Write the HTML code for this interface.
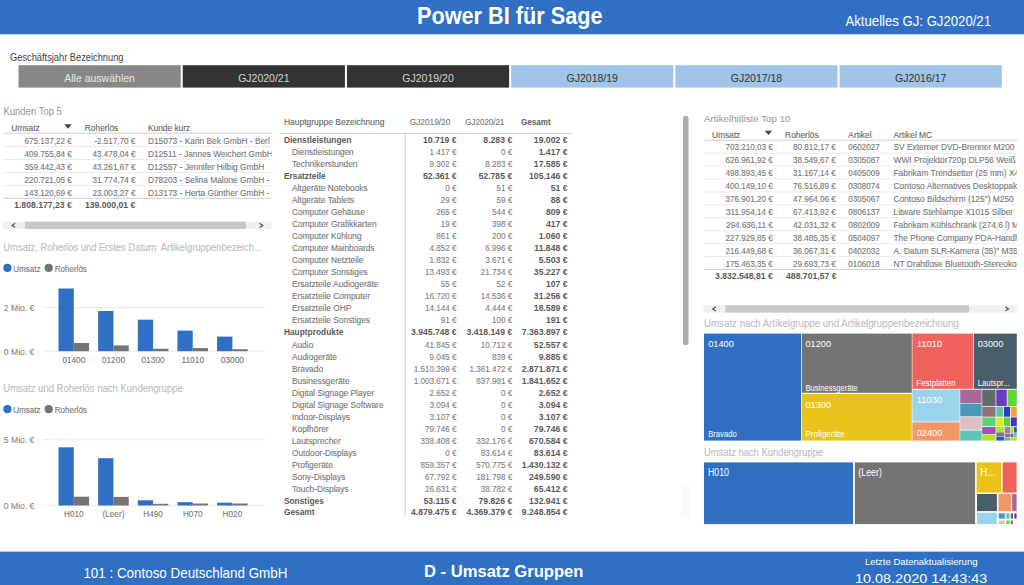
<!DOCTYPE html>
<html><head><meta charset="utf-8"><title>Power BI für Sage</title>
<style>html,body{margin:0;padding:0;background:#fff;overflow:hidden}svg{display:block}text{font-family:"Liberation Sans",sans-serif}</style>
</head><body>
<svg width="1024" height="585" viewBox="0 0 1024 585" font-family="Liberation Sans, sans-serif">
<defs><clipPath id="ck"><rect x="140" y="120" width="131.5" height="90"/></clipPath><clipPath id="ca"><rect x="880" y="130" width="137" height="160"/></clipPath></defs>
<rect width="1024" height="585" fill="#fff"/>
<rect x="0.00" y="0.00" width="1024.00" height="34.25" fill="#2F70C4" />
<text x="417.00" y="24.20" font-size="23" fill="#fff" font-weight="bold" textLength="185.50" lengthAdjust="spacingAndGlyphs">Power BI für Sage</text>
<text x="845.50" y="25.70" font-size="14" fill="#fff" textLength="145.50" lengthAdjust="spacingAndGlyphs">Aktuelles GJ: GJ2020/21</text>
<text x="10.00" y="61.30" font-size="10.3" fill="#444" textLength="113.50" lengthAdjust="spacingAndGlyphs">Geschäftsjahr Bezeichnung</text>
<rect x="18.50" y="65.20" width="162.20" height="22.40" fill="#878787" />
<text x="99.60" y="81.50" font-size="10.5" fill="#E8E8E8" text-anchor="middle">Alle auswählen</text>
<rect x="182.72" y="65.20" width="162.20" height="22.40" fill="#333333" />
<text x="263.82" y="81.50" font-size="10.5" fill="#D4D4D4" text-anchor="middle">GJ2020/21</text>
<rect x="346.94" y="65.20" width="162.20" height="22.40" fill="#333333" />
<text x="428.04" y="81.50" font-size="10.5" fill="#D4D4D4" text-anchor="middle">GJ2019/20</text>
<rect x="511.16" y="65.20" width="162.20" height="22.40" fill="#A0C4E7" />
<text x="592.26" y="81.50" font-size="10.5" fill="#333" text-anchor="middle">GJ2018/19</text>
<rect x="675.38" y="65.20" width="162.20" height="22.40" fill="#A0C4E7" />
<text x="756.48" y="81.50" font-size="10.5" fill="#333" text-anchor="middle">GJ2017/18</text>
<rect x="839.60" y="65.20" width="162.20" height="22.40" fill="#A0C4E7" />
<text x="920.70" y="81.50" font-size="10.5" fill="#333" text-anchor="middle">GJ2016/17</text>
<text x="3.40" y="115.30" font-size="10" fill="#A0A0A0" stroke="#A0A0A0" stroke-width="0.12" textLength="58.50" lengthAdjust="spacingAndGlyphs">Kunden Top 5</text>
<text x="11.30" y="131.20" font-size="9" fill="#666" stroke="#666" stroke-width="0.12" textLength="28.37" lengthAdjust="spacingAndGlyphs">Umsatz</text>
<path d="M64.3 124.3 L71.8 124.3 L68.05 128.7 Z" fill="#444"/>
<text x="84.80" y="131.20" font-size="9" fill="#666" stroke="#666" stroke-width="0.12" textLength="33.50" lengthAdjust="spacingAndGlyphs">Roherlös</text>
<text x="147.90" y="131.20" font-size="9" fill="#666" stroke="#666" stroke-width="0.12" textLength="42.34" lengthAdjust="spacingAndGlyphs">Kunde kurz</text>
<line x1="3.00" y1="133.20" x2="271.30" y2="133.20" stroke="#CFCFCF" stroke-width="1"/>
<line x1="3.00" y1="146.50" x2="271.30" y2="146.50" stroke="#EBEBEB" stroke-width="1"/>
<line x1="3.00" y1="159.50" x2="271.30" y2="159.50" stroke="#EBEBEB" stroke-width="1"/>
<line x1="3.00" y1="172.50" x2="271.30" y2="172.50" stroke="#EBEBEB" stroke-width="1"/>
<line x1="3.00" y1="185.40" x2="271.30" y2="185.40" stroke="#EBEBEB" stroke-width="1"/>
<line x1="3.00" y1="198.30" x2="271.30" y2="198.30" stroke="#CFCFCF" stroke-width="1"/>
<text x="71.80" y="144.00" font-size="9" fill="#777" stroke="#777" stroke-width="0.12" text-anchor="end" textLength="47.29" lengthAdjust="spacingAndGlyphs">675.137,22 €</text>
<text x="135.40" y="144.00" font-size="9" fill="#777" stroke="#777" stroke-width="0.12" text-anchor="end" textLength="40.98" lengthAdjust="spacingAndGlyphs">-2.517,70 €</text>
<text x="147.90" y="144.00" font-size="9" fill="#777" stroke="#777" stroke-width="0.12" textLength="121.88" lengthAdjust="spacingAndGlyphs" clip-path="url(#ck)">D15073 - Karin Bek GmbH - Berl</text>
<text x="71.80" y="157.00" font-size="9" fill="#777" stroke="#777" stroke-width="0.12" text-anchor="end" textLength="47.29" lengthAdjust="spacingAndGlyphs">409.755,84 €</text>
<text x="135.40" y="157.00" font-size="9" fill="#777" stroke="#777" stroke-width="0.12" text-anchor="end" textLength="42.79" lengthAdjust="spacingAndGlyphs">43.478,04 €</text>
<text x="147.90" y="157.00" font-size="9" fill="#777" stroke="#777" stroke-width="0.12" textLength="124.83" lengthAdjust="spacingAndGlyphs" clip-path="url(#ck)">D12511 - Jannes Weichert GmbH</text>
<text x="71.80" y="170.00" font-size="9" fill="#777" stroke="#777" stroke-width="0.12" text-anchor="end" textLength="47.29" lengthAdjust="spacingAndGlyphs">359.442,43 €</text>
<text x="135.40" y="170.00" font-size="9" fill="#777" stroke="#777" stroke-width="0.12" text-anchor="end" textLength="42.79" lengthAdjust="spacingAndGlyphs">43.261,67 €</text>
<text x="147.90" y="170.00" font-size="9" fill="#777" stroke="#777" stroke-width="0.12" textLength="116.30" lengthAdjust="spacingAndGlyphs" clip-path="url(#ck)">D12557 - Jennifer Hilbig GmbH</text>
<text x="71.80" y="183.00" font-size="9" fill="#777" stroke="#777" stroke-width="0.12" text-anchor="end" textLength="47.29" lengthAdjust="spacingAndGlyphs">220.721,05 €</text>
<text x="135.40" y="183.00" font-size="9" fill="#777" stroke="#777" stroke-width="0.12" text-anchor="end" textLength="42.79" lengthAdjust="spacingAndGlyphs">31.774,74 €</text>
<text x="147.90" y="183.00" font-size="9" fill="#777" stroke="#777" stroke-width="0.12" textLength="140.50" lengthAdjust="spacingAndGlyphs" clip-path="url(#ck)">D78203 - Selina Malone GmbH - Köln</text>
<text x="71.80" y="196.00" font-size="9" fill="#777" stroke="#777" stroke-width="0.12" text-anchor="end" textLength="47.29" lengthAdjust="spacingAndGlyphs">143.120,69 €</text>
<text x="135.40" y="196.00" font-size="9" fill="#777" stroke="#777" stroke-width="0.12" text-anchor="end" textLength="42.79" lengthAdjust="spacingAndGlyphs">23.003,27 €</text>
<text x="147.90" y="196.00" font-size="9" fill="#777" stroke="#777" stroke-width="0.12" textLength="143.29" lengthAdjust="spacingAndGlyphs" clip-path="url(#ck)">D13173 - Herta Günther GmbH - Bonn</text>
<text x="71.80" y="207.90" font-size="9" fill="#5A5A5A" text-anchor="end" font-weight="bold" textLength="57.65" lengthAdjust="spacingAndGlyphs">1.808.177,23 €</text>
<text x="135.40" y="207.90" font-size="9" fill="#5A5A5A" text-anchor="end" font-weight="bold" textLength="50.45" lengthAdjust="spacingAndGlyphs">139.000,01 €</text>
<rect x="2.90" y="221.70" width="268.40" height="7.20" fill="#F0F0F0" />
<rect x="24.90" y="221.70" width="220.90" height="7.20" fill="#C8C8C8" />
<path d="M15.2 223.3 L12 225.4 L15.2 227.5" fill="none" stroke="#555" stroke-width="1.2"/>
<path d="M259.6 223.3 L262.8 225.4 L259.6 227.5" fill="none" stroke="#555" stroke-width="1.2"/>
<text x="3.30" y="250.50" font-size="10" fill="#BDBDBD" stroke="#BDBDBD" stroke-width="0.12" textLength="258.50" lengthAdjust="spacingAndGlyphs">Umsatz, Roherlös und Erstes Datum: Artikelgruppenbezeich...</text>
<circle cx="7.4" cy="267.9" r="4.1" fill="#2F70C4"/>
<text x="13.20" y="271.80" font-size="9" fill="#777" stroke="#777" stroke-width="0.12" textLength="27.30" lengthAdjust="spacingAndGlyphs">Umsatz</text>
<circle cx="48.7" cy="267.9" r="4.1" fill="#747474"/>
<text x="54.70" y="271.80" font-size="9" fill="#777" stroke="#777" stroke-width="0.12" textLength="32.20" lengthAdjust="spacingAndGlyphs">Roherlös</text>
<line x1="42.30" y1="307.50" x2="264.70" y2="307.50" stroke="#EAEAEA" stroke-width="1"/>
<line x1="42.30" y1="351.20" x2="264.70" y2="351.20" stroke="#EAEAEA" stroke-width="1"/>
<text x="3.80" y="310.80" font-size="9" fill="#888" stroke="#888" stroke-width="0.12" textLength="30.60" lengthAdjust="spacingAndGlyphs">2 Mio. €</text>
<text x="3.80" y="354.50" font-size="9" fill="#888" stroke="#888" stroke-width="0.12" textLength="30.60" lengthAdjust="spacingAndGlyphs">0 Mio. €</text>
<rect x="58.50" y="288.50" width="15.30" height="62.70" fill="#2F70C4" />
<rect x="73.80" y="343.00" width="15.30" height="8.20" fill="#747474" />
<text x="73.80" y="363.30" font-size="9" fill="#777" stroke="#777" stroke-width="0.12" text-anchor="middle" textLength="23.27" lengthAdjust="spacingAndGlyphs">01400</text>
<rect x="98.15" y="311.00" width="15.30" height="40.20" fill="#2F70C4" />
<rect x="113.45" y="345.40" width="15.30" height="5.80" fill="#747474" />
<text x="113.45" y="363.30" font-size="9" fill="#777" stroke="#777" stroke-width="0.12" text-anchor="middle" textLength="23.27" lengthAdjust="spacingAndGlyphs">01200</text>
<rect x="137.80" y="319.70" width="15.30" height="31.50" fill="#2F70C4" />
<rect x="153.10" y="348.70" width="15.30" height="2.50" fill="#747474" />
<text x="153.10" y="363.30" font-size="9" fill="#777" stroke="#777" stroke-width="0.12" text-anchor="middle" textLength="23.27" lengthAdjust="spacingAndGlyphs">01300</text>
<rect x="177.45" y="330.60" width="15.30" height="20.60" fill="#2F70C4" />
<rect x="192.75" y="348.10" width="15.30" height="3.10" fill="#747474" />
<text x="192.75" y="363.30" font-size="9" fill="#777" stroke="#777" stroke-width="0.12" text-anchor="middle" textLength="22.65" lengthAdjust="spacingAndGlyphs">11010</text>
<rect x="217.10" y="336.60" width="15.30" height="14.60" fill="#2F70C4" />
<rect x="232.40" y="349.20" width="15.30" height="2.00" fill="#747474" />
<text x="232.40" y="363.30" font-size="9" fill="#777" stroke="#777" stroke-width="0.12" text-anchor="middle" textLength="23.27" lengthAdjust="spacingAndGlyphs">03000</text>
<text x="3.30" y="392.00" font-size="10" fill="#BDBDBD" stroke="#BDBDBD" stroke-width="0.12" textLength="179.50" lengthAdjust="spacingAndGlyphs">Umsatz und Roherlös nach Kundengruppe</text>
<circle cx="7.4" cy="409.2" r="4.1" fill="#2F70C4"/>
<text x="13.20" y="413.10" font-size="9" fill="#777" stroke="#777" stroke-width="0.12" textLength="27.30" lengthAdjust="spacingAndGlyphs">Umsatz</text>
<circle cx="48.7" cy="409.2" r="4.1" fill="#747474"/>
<text x="54.70" y="413.10" font-size="9" fill="#777" stroke="#777" stroke-width="0.12" textLength="32.20" lengthAdjust="spacingAndGlyphs">Roherlös</text>
<line x1="42.30" y1="439.70" x2="264.70" y2="439.70" stroke="#EAEAEA" stroke-width="1"/>
<line x1="42.30" y1="505.50" x2="264.70" y2="505.50" stroke="#EAEAEA" stroke-width="1"/>
<text x="3.80" y="442.90" font-size="9" fill="#888" stroke="#888" stroke-width="0.12" textLength="30.60" lengthAdjust="spacingAndGlyphs">5 Mio. €</text>
<text x="3.80" y="509.00" font-size="9" fill="#888" stroke="#888" stroke-width="0.12" textLength="30.60" lengthAdjust="spacingAndGlyphs">0 Mio. €</text>
<rect x="58.50" y="447.30" width="15.30" height="58.20" fill="#2F70C4" />
<rect x="73.80" y="496.70" width="15.30" height="8.80" fill="#747474" />
<text x="73.80" y="516.80" font-size="9" fill="#777" stroke="#777" stroke-width="0.12" text-anchor="middle" textLength="19.58" lengthAdjust="spacingAndGlyphs">H010</text>
<rect x="98.15" y="458.20" width="15.30" height="47.30" fill="#2F70C4" />
<rect x="113.45" y="496.90" width="15.30" height="8.60" fill="#747474" />
<text x="113.45" y="516.80" font-size="9" fill="#777" stroke="#777" stroke-width="0.12" text-anchor="middle" textLength="21.85" lengthAdjust="spacingAndGlyphs">(Leer)</text>
<rect x="137.80" y="500.30" width="15.30" height="5.20" fill="#2F70C4" />
<rect x="153.10" y="503.80" width="15.30" height="1.70" fill="#747474" />
<text x="153.10" y="516.80" font-size="9" fill="#777" stroke="#777" stroke-width="0.12" text-anchor="middle" textLength="19.58" lengthAdjust="spacingAndGlyphs">H490</text>
<rect x="177.45" y="502.20" width="15.30" height="3.30" fill="#2F70C4" />
<rect x="192.75" y="503.50" width="15.30" height="2.00" fill="#747474" />
<text x="192.75" y="516.80" font-size="9" fill="#777" stroke="#777" stroke-width="0.12" text-anchor="middle" textLength="19.58" lengthAdjust="spacingAndGlyphs">H070</text>
<rect x="217.10" y="502.70" width="15.30" height="2.80" fill="#2F70C4" />
<rect x="232.40" y="503.50" width="15.30" height="2.00" fill="#747474" />
<text x="232.40" y="516.80" font-size="9" fill="#777" stroke="#777" stroke-width="0.12" text-anchor="middle" textLength="19.58" lengthAdjust="spacingAndGlyphs">H020</text>
<text x="283.90" y="125.00" font-size="9" fill="#666" stroke="#666" stroke-width="0.12" textLength="100.50" lengthAdjust="spacingAndGlyphs">Hauptgruppe Bezeichnung</text>
<text x="409.70" y="125.00" font-size="9" fill="#777" stroke="#777" stroke-width="0.12" textLength="40.60" lengthAdjust="spacingAndGlyphs">GJ2019/20</text>
<text x="465.30" y="125.00" font-size="9" fill="#777" stroke="#777" stroke-width="0.12" textLength="39.10" lengthAdjust="spacingAndGlyphs">GJ2020/21</text>
<text x="521.00" y="125.00" font-size="9" fill="#5A5A5A" font-weight="bold" textLength="29.60" lengthAdjust="spacingAndGlyphs">Gesamt</text>
<line x1="280.20" y1="133.40" x2="571.60" y2="133.40" stroke="#CFCFCF" stroke-width="1"/>
<line x1="405.20" y1="133.40" x2="405.20" y2="517.80" stroke="#D6D6D6" stroke-width="1"/>
<text x="283.90" y="143.00" font-size="9" fill="#5A5A5A" font-weight="bold" textLength="67.43" lengthAdjust="spacingAndGlyphs">Dienstleistungen</text>
<text x="456.60" y="143.00" font-size="9" fill="#5A5A5A" text-anchor="end" font-weight="bold" textLength="33.63" lengthAdjust="spacingAndGlyphs">10.719 €</text>
<text x="512.20" y="143.00" font-size="9" fill="#5A5A5A" text-anchor="end" font-weight="bold" textLength="28.83" lengthAdjust="spacingAndGlyphs">8.283 €</text>
<text x="567.50" y="143.00" font-size="9" fill="#5A5A5A" text-anchor="end" font-weight="bold" textLength="33.63" lengthAdjust="spacingAndGlyphs">19.002 €</text>
<text x="291.90" y="155.03" font-size="9" fill="#777" stroke="#777" stroke-width="0.12" textLength="61.88" lengthAdjust="spacingAndGlyphs">Dienstleistungen</text>
<text x="456.60" y="155.03" font-size="9" fill="#828282" stroke="#828282" stroke-width="0.12" text-anchor="end" textLength="27.03" lengthAdjust="spacingAndGlyphs">1.417 €</text>
<text x="512.20" y="155.03" font-size="9" fill="#828282" stroke="#828282" stroke-width="0.12" text-anchor="end" textLength="11.26" lengthAdjust="spacingAndGlyphs">0 €</text>
<text x="567.50" y="155.03" font-size="9" fill="#5A5A5A" text-anchor="end" font-weight="bold" textLength="28.83" lengthAdjust="spacingAndGlyphs">1.417 €</text>
<text x="291.90" y="167.06" font-size="9" fill="#777" stroke="#777" stroke-width="0.12" textLength="65.61" lengthAdjust="spacingAndGlyphs">Technikerstunden</text>
<text x="456.60" y="167.06" font-size="9" fill="#828282" stroke="#828282" stroke-width="0.12" text-anchor="end" textLength="27.03" lengthAdjust="spacingAndGlyphs">9.302 €</text>
<text x="512.20" y="167.06" font-size="9" fill="#828282" stroke="#828282" stroke-width="0.12" text-anchor="end" textLength="27.03" lengthAdjust="spacingAndGlyphs">8.283 €</text>
<text x="567.50" y="167.06" font-size="9" fill="#5A5A5A" text-anchor="end" font-weight="bold" textLength="33.63" lengthAdjust="spacingAndGlyphs">17.585 €</text>
<text x="283.90" y="179.09" font-size="9" fill="#5A5A5A" font-weight="bold" textLength="41.87" lengthAdjust="spacingAndGlyphs">Ersatzteile</text>
<text x="456.60" y="179.09" font-size="9" fill="#5A5A5A" text-anchor="end" font-weight="bold" textLength="33.63" lengthAdjust="spacingAndGlyphs">52.361 €</text>
<text x="512.20" y="179.09" font-size="9" fill="#5A5A5A" text-anchor="end" font-weight="bold" textLength="33.63" lengthAdjust="spacingAndGlyphs">52.785 €</text>
<text x="567.50" y="179.09" font-size="9" fill="#5A5A5A" text-anchor="end" font-weight="bold" textLength="38.44" lengthAdjust="spacingAndGlyphs">105.146 €</text>
<text x="291.90" y="191.12" font-size="9" fill="#777" stroke="#777" stroke-width="0.12" textLength="75.84" lengthAdjust="spacingAndGlyphs">Altgeräte Notebooks</text>
<text x="456.60" y="191.12" font-size="9" fill="#828282" stroke="#828282" stroke-width="0.12" text-anchor="end" textLength="11.26" lengthAdjust="spacingAndGlyphs">0 €</text>
<text x="512.20" y="191.12" font-size="9" fill="#828282" stroke="#828282" stroke-width="0.12" text-anchor="end" textLength="15.76" lengthAdjust="spacingAndGlyphs">51 €</text>
<text x="567.50" y="191.12" font-size="9" fill="#5A5A5A" text-anchor="end" font-weight="bold" textLength="16.82" lengthAdjust="spacingAndGlyphs">51 €</text>
<text x="291.90" y="203.15" font-size="9" fill="#777" stroke="#777" stroke-width="0.12" textLength="62.35" lengthAdjust="spacingAndGlyphs">Altgeräte Tablets</text>
<text x="456.60" y="203.15" font-size="9" fill="#828282" stroke="#828282" stroke-width="0.12" text-anchor="end" textLength="15.76" lengthAdjust="spacingAndGlyphs">29 €</text>
<text x="512.20" y="203.15" font-size="9" fill="#828282" stroke="#828282" stroke-width="0.12" text-anchor="end" textLength="15.76" lengthAdjust="spacingAndGlyphs">59 €</text>
<text x="567.50" y="203.15" font-size="9" fill="#5A5A5A" text-anchor="end" font-weight="bold" textLength="16.82" lengthAdjust="spacingAndGlyphs">88 €</text>
<text x="291.90" y="215.18" font-size="9" fill="#777" stroke="#777" stroke-width="0.12" textLength="73.05" lengthAdjust="spacingAndGlyphs">Computer Gehäuse</text>
<text x="456.60" y="215.18" font-size="9" fill="#828282" stroke="#828282" stroke-width="0.12" text-anchor="end" textLength="20.27" lengthAdjust="spacingAndGlyphs">265 €</text>
<text x="512.20" y="215.18" font-size="9" fill="#828282" stroke="#828282" stroke-width="0.12" text-anchor="end" textLength="20.27" lengthAdjust="spacingAndGlyphs">544 €</text>
<text x="567.50" y="215.18" font-size="9" fill="#5A5A5A" text-anchor="end" font-weight="bold" textLength="21.62" lengthAdjust="spacingAndGlyphs">809 €</text>
<text x="291.90" y="227.21" font-size="9" fill="#777" stroke="#777" stroke-width="0.12" textLength="84.66" lengthAdjust="spacingAndGlyphs">Computer Grafikkarten</text>
<text x="456.60" y="227.21" font-size="9" fill="#828282" stroke="#828282" stroke-width="0.12" text-anchor="end" textLength="15.76" lengthAdjust="spacingAndGlyphs">19 €</text>
<text x="512.20" y="227.21" font-size="9" fill="#828282" stroke="#828282" stroke-width="0.12" text-anchor="end" textLength="20.27" lengthAdjust="spacingAndGlyphs">398 €</text>
<text x="567.50" y="227.21" font-size="9" fill="#5A5A5A" text-anchor="end" font-weight="bold" textLength="21.62" lengthAdjust="spacingAndGlyphs">417 €</text>
<text x="291.90" y="239.24" font-size="9" fill="#777" stroke="#777" stroke-width="0.12" textLength="69.79" lengthAdjust="spacingAndGlyphs">Computer Kühlung</text>
<text x="456.60" y="239.24" font-size="9" fill="#828282" stroke="#828282" stroke-width="0.12" text-anchor="end" textLength="20.27" lengthAdjust="spacingAndGlyphs">861 €</text>
<text x="512.20" y="239.24" font-size="9" fill="#828282" stroke="#828282" stroke-width="0.12" text-anchor="end" textLength="20.27" lengthAdjust="spacingAndGlyphs">200 €</text>
<text x="567.50" y="239.24" font-size="9" fill="#5A5A5A" text-anchor="end" font-weight="bold" textLength="28.83" lengthAdjust="spacingAndGlyphs">1.060 €</text>
<text x="291.90" y="251.27" font-size="9" fill="#777" stroke="#777" stroke-width="0.12" textLength="82.81" lengthAdjust="spacingAndGlyphs">Computer Mainboards</text>
<text x="456.60" y="251.27" font-size="9" fill="#828282" stroke="#828282" stroke-width="0.12" text-anchor="end" textLength="27.03" lengthAdjust="spacingAndGlyphs">4.852 €</text>
<text x="512.20" y="251.27" font-size="9" fill="#828282" stroke="#828282" stroke-width="0.12" text-anchor="end" textLength="27.03" lengthAdjust="spacingAndGlyphs">6.996 €</text>
<text x="567.50" y="251.27" font-size="9" fill="#5A5A5A" text-anchor="end" font-weight="bold" textLength="33.16" lengthAdjust="spacingAndGlyphs">11.848 €</text>
<text x="291.90" y="263.30" font-size="9" fill="#777" stroke="#777" stroke-width="0.12" textLength="71.64" lengthAdjust="spacingAndGlyphs">Computer Netzteile</text>
<text x="456.60" y="263.30" font-size="9" fill="#828282" stroke="#828282" stroke-width="0.12" text-anchor="end" textLength="27.03" lengthAdjust="spacingAndGlyphs">1.832 €</text>
<text x="512.20" y="263.30" font-size="9" fill="#828282" stroke="#828282" stroke-width="0.12" text-anchor="end" textLength="27.03" lengthAdjust="spacingAndGlyphs">3.671 €</text>
<text x="567.50" y="263.30" font-size="9" fill="#5A5A5A" text-anchor="end" font-weight="bold" textLength="28.83" lengthAdjust="spacingAndGlyphs">5.503 €</text>
<text x="291.90" y="275.33" font-size="9" fill="#777" stroke="#777" stroke-width="0.12" textLength="75.83" lengthAdjust="spacingAndGlyphs">Computer Sonstiges</text>
<text x="456.60" y="275.33" font-size="9" fill="#828282" stroke="#828282" stroke-width="0.12" text-anchor="end" textLength="31.53" lengthAdjust="spacingAndGlyphs">13.493 €</text>
<text x="512.20" y="275.33" font-size="9" fill="#828282" stroke="#828282" stroke-width="0.12" text-anchor="end" textLength="31.53" lengthAdjust="spacingAndGlyphs">21.734 €</text>
<text x="567.50" y="275.33" font-size="9" fill="#5A5A5A" text-anchor="end" font-weight="bold" textLength="33.63" lengthAdjust="spacingAndGlyphs">35.227 €</text>
<text x="291.90" y="287.36" font-size="9" fill="#777" stroke="#777" stroke-width="0.12" textLength="86.54" lengthAdjust="spacingAndGlyphs">Ersatzteile Audiogeräte</text>
<text x="456.60" y="287.36" font-size="9" fill="#828282" stroke="#828282" stroke-width="0.12" text-anchor="end" textLength="15.76" lengthAdjust="spacingAndGlyphs">55 €</text>
<text x="512.20" y="287.36" font-size="9" fill="#828282" stroke="#828282" stroke-width="0.12" text-anchor="end" textLength="15.76" lengthAdjust="spacingAndGlyphs">52 €</text>
<text x="567.50" y="287.36" font-size="9" fill="#5A5A5A" text-anchor="end" font-weight="bold" textLength="21.62" lengthAdjust="spacingAndGlyphs">107 €</text>
<text x="291.90" y="299.39" font-size="9" fill="#777" stroke="#777" stroke-width="0.12" textLength="78.15" lengthAdjust="spacingAndGlyphs">Ersatzteile Computer</text>
<text x="456.60" y="299.39" font-size="9" fill="#828282" stroke="#828282" stroke-width="0.12" text-anchor="end" textLength="31.53" lengthAdjust="spacingAndGlyphs">16.720 €</text>
<text x="512.20" y="299.39" font-size="9" fill="#828282" stroke="#828282" stroke-width="0.12" text-anchor="end" textLength="31.53" lengthAdjust="spacingAndGlyphs">14.536 €</text>
<text x="567.50" y="299.39" font-size="9" fill="#5A5A5A" text-anchor="end" font-weight="bold" textLength="33.63" lengthAdjust="spacingAndGlyphs">31.256 €</text>
<text x="291.90" y="311.42" font-size="9" fill="#777" stroke="#777" stroke-width="0.12" textLength="59.54" lengthAdjust="spacingAndGlyphs">Ersatzteile OHP</text>
<text x="456.60" y="311.42" font-size="9" fill="#828282" stroke="#828282" stroke-width="0.12" text-anchor="end" textLength="31.53" lengthAdjust="spacingAndGlyphs">14.144 €</text>
<text x="512.20" y="311.42" font-size="9" fill="#828282" stroke="#828282" stroke-width="0.12" text-anchor="end" textLength="27.03" lengthAdjust="spacingAndGlyphs">4.444 €</text>
<text x="567.50" y="311.42" font-size="9" fill="#5A5A5A" text-anchor="end" font-weight="bold" textLength="33.63" lengthAdjust="spacingAndGlyphs">18.589 €</text>
<text x="291.90" y="323.45" font-size="9" fill="#777" stroke="#777" stroke-width="0.12" textLength="78.16" lengthAdjust="spacingAndGlyphs">Ersatzteile Sonstiges</text>
<text x="456.60" y="323.45" font-size="9" fill="#828282" stroke="#828282" stroke-width="0.12" text-anchor="end" textLength="15.76" lengthAdjust="spacingAndGlyphs">91 €</text>
<text x="512.20" y="323.45" font-size="9" fill="#828282" stroke="#828282" stroke-width="0.12" text-anchor="end" textLength="20.27" lengthAdjust="spacingAndGlyphs">100 €</text>
<text x="567.50" y="323.45" font-size="9" fill="#5A5A5A" text-anchor="end" font-weight="bold" textLength="21.62" lengthAdjust="spacingAndGlyphs">191 €</text>
<text x="283.90" y="335.48" font-size="9" fill="#5A5A5A" font-weight="bold" textLength="59.52" lengthAdjust="spacingAndGlyphs">Hauptprodukte</text>
<text x="456.60" y="335.48" font-size="9" fill="#5A5A5A" text-anchor="end" font-weight="bold" textLength="45.64" lengthAdjust="spacingAndGlyphs">3.945.748 €</text>
<text x="512.20" y="335.48" font-size="9" fill="#5A5A5A" text-anchor="end" font-weight="bold" textLength="45.64" lengthAdjust="spacingAndGlyphs">3.418.149 €</text>
<text x="567.50" y="335.48" font-size="9" fill="#5A5A5A" text-anchor="end" font-weight="bold" textLength="45.64" lengthAdjust="spacingAndGlyphs">7.363.897 €</text>
<text x="291.90" y="347.51" font-size="9" fill="#777" stroke="#777" stroke-width="0.12" textLength="21.41" lengthAdjust="spacingAndGlyphs">Audio</text>
<text x="456.60" y="347.51" font-size="9" fill="#828282" stroke="#828282" stroke-width="0.12" text-anchor="end" textLength="31.53" lengthAdjust="spacingAndGlyphs">41.845 €</text>
<text x="512.20" y="347.51" font-size="9" fill="#828282" stroke="#828282" stroke-width="0.12" text-anchor="end" textLength="31.53" lengthAdjust="spacingAndGlyphs">10.712 €</text>
<text x="567.50" y="347.51" font-size="9" fill="#5A5A5A" text-anchor="end" font-weight="bold" textLength="33.63" lengthAdjust="spacingAndGlyphs">52.557 €</text>
<text x="291.90" y="359.54" font-size="9" fill="#777" stroke="#777" stroke-width="0.12" textLength="45.14" lengthAdjust="spacingAndGlyphs">Audiogeräte</text>
<text x="456.60" y="359.54" font-size="9" fill="#828282" stroke="#828282" stroke-width="0.12" text-anchor="end" textLength="27.03" lengthAdjust="spacingAndGlyphs">9.045 €</text>
<text x="512.20" y="359.54" font-size="9" fill="#828282" stroke="#828282" stroke-width="0.12" text-anchor="end" textLength="20.27" lengthAdjust="spacingAndGlyphs">839 €</text>
<text x="567.50" y="359.54" font-size="9" fill="#5A5A5A" text-anchor="end" font-weight="bold" textLength="28.83" lengthAdjust="spacingAndGlyphs">9.885 €</text>
<text x="291.90" y="371.57" font-size="9" fill="#777" stroke="#777" stroke-width="0.12" textLength="31.17" lengthAdjust="spacingAndGlyphs">Bravado</text>
<text x="456.60" y="371.57" font-size="9" fill="#828282" stroke="#828282" stroke-width="0.12" text-anchor="end" textLength="42.79" lengthAdjust="spacingAndGlyphs">1.510.399 €</text>
<text x="512.20" y="371.57" font-size="9" fill="#828282" stroke="#828282" stroke-width="0.12" text-anchor="end" textLength="42.79" lengthAdjust="spacingAndGlyphs">1.361.472 €</text>
<text x="567.50" y="371.57" font-size="9" fill="#5A5A5A" text-anchor="end" font-weight="bold" textLength="45.64" lengthAdjust="spacingAndGlyphs">2.871.871 €</text>
<text x="291.90" y="383.60" font-size="9" fill="#777" stroke="#777" stroke-width="0.12" textLength="57.69" lengthAdjust="spacingAndGlyphs">Businessgeräte</text>
<text x="456.60" y="383.60" font-size="9" fill="#828282" stroke="#828282" stroke-width="0.12" text-anchor="end" textLength="42.79" lengthAdjust="spacingAndGlyphs">1.003.671 €</text>
<text x="512.20" y="383.60" font-size="9" fill="#828282" stroke="#828282" stroke-width="0.12" text-anchor="end" textLength="36.03" lengthAdjust="spacingAndGlyphs">837.981 €</text>
<text x="567.50" y="383.60" font-size="9" fill="#5A5A5A" text-anchor="end" font-weight="bold" textLength="45.64" lengthAdjust="spacingAndGlyphs">1.841.652 €</text>
<text x="291.90" y="395.63" font-size="9" fill="#777" stroke="#777" stroke-width="0.12" textLength="82.35" lengthAdjust="spacingAndGlyphs">Digital Signage Player</text>
<text x="456.60" y="395.63" font-size="9" fill="#828282" stroke="#828282" stroke-width="0.12" text-anchor="end" textLength="27.03" lengthAdjust="spacingAndGlyphs">2.652 €</text>
<text x="512.20" y="395.63" font-size="9" fill="#828282" stroke="#828282" stroke-width="0.12" text-anchor="end" textLength="11.26" lengthAdjust="spacingAndGlyphs">0 €</text>
<text x="567.50" y="395.63" font-size="9" fill="#5A5A5A" text-anchor="end" font-weight="bold" textLength="28.83" lengthAdjust="spacingAndGlyphs">2.652 €</text>
<text x="291.90" y="407.66" font-size="9" fill="#777" stroke="#777" stroke-width="0.12" textLength="91.66" lengthAdjust="spacingAndGlyphs">Digital Signage Software</text>
<text x="456.60" y="407.66" font-size="9" fill="#828282" stroke="#828282" stroke-width="0.12" text-anchor="end" textLength="27.03" lengthAdjust="spacingAndGlyphs">3.094 €</text>
<text x="512.20" y="407.66" font-size="9" fill="#828282" stroke="#828282" stroke-width="0.12" text-anchor="end" textLength="11.26" lengthAdjust="spacingAndGlyphs">0 €</text>
<text x="567.50" y="407.66" font-size="9" fill="#5A5A5A" text-anchor="end" font-weight="bold" textLength="28.83" lengthAdjust="spacingAndGlyphs">3.094 €</text>
<text x="291.90" y="419.69" font-size="9" fill="#777" stroke="#777" stroke-width="0.12" textLength="58.15" lengthAdjust="spacingAndGlyphs">Indoor-Displays</text>
<text x="456.60" y="419.69" font-size="9" fill="#828282" stroke="#828282" stroke-width="0.12" text-anchor="end" textLength="27.03" lengthAdjust="spacingAndGlyphs">3.107 €</text>
<text x="512.20" y="419.69" font-size="9" fill="#828282" stroke="#828282" stroke-width="0.12" text-anchor="end" textLength="11.26" lengthAdjust="spacingAndGlyphs">0 €</text>
<text x="567.50" y="419.69" font-size="9" fill="#5A5A5A" text-anchor="end" font-weight="bold" textLength="28.83" lengthAdjust="spacingAndGlyphs">3.107 €</text>
<text x="291.90" y="431.72" font-size="9" fill="#777" stroke="#777" stroke-width="0.12" textLength="36.76" lengthAdjust="spacingAndGlyphs">Kopfhörer</text>
<text x="456.60" y="431.72" font-size="9" fill="#828282" stroke="#828282" stroke-width="0.12" text-anchor="end" textLength="31.53" lengthAdjust="spacingAndGlyphs">79.746 €</text>
<text x="512.20" y="431.72" font-size="9" fill="#828282" stroke="#828282" stroke-width="0.12" text-anchor="end" textLength="11.26" lengthAdjust="spacingAndGlyphs">0 €</text>
<text x="567.50" y="431.72" font-size="9" fill="#5A5A5A" text-anchor="end" font-weight="bold" textLength="33.63" lengthAdjust="spacingAndGlyphs">79.746 €</text>
<text x="291.90" y="443.75" font-size="9" fill="#777" stroke="#777" stroke-width="0.12" textLength="48.85" lengthAdjust="spacingAndGlyphs">Lautsprecher</text>
<text x="456.60" y="443.75" font-size="9" fill="#828282" stroke="#828282" stroke-width="0.12" text-anchor="end" textLength="36.03" lengthAdjust="spacingAndGlyphs">338.408 €</text>
<text x="512.20" y="443.75" font-size="9" fill="#828282" stroke="#828282" stroke-width="0.12" text-anchor="end" textLength="36.03" lengthAdjust="spacingAndGlyphs">332.176 €</text>
<text x="567.50" y="443.75" font-size="9" fill="#5A5A5A" text-anchor="end" font-weight="bold" textLength="38.44" lengthAdjust="spacingAndGlyphs">670.584 €</text>
<text x="291.90" y="455.78" font-size="9" fill="#777" stroke="#777" stroke-width="0.12" textLength="64.66" lengthAdjust="spacingAndGlyphs">Outdoor-Displays</text>
<text x="456.60" y="455.78" font-size="9" fill="#828282" stroke="#828282" stroke-width="0.12" text-anchor="end" textLength="11.26" lengthAdjust="spacingAndGlyphs">0 €</text>
<text x="512.20" y="455.78" font-size="9" fill="#828282" stroke="#828282" stroke-width="0.12" text-anchor="end" textLength="31.53" lengthAdjust="spacingAndGlyphs">83.614 €</text>
<text x="567.50" y="455.78" font-size="9" fill="#5A5A5A" text-anchor="end" font-weight="bold" textLength="33.63" lengthAdjust="spacingAndGlyphs">83.614 €</text>
<text x="291.90" y="467.81" font-size="9" fill="#777" stroke="#777" stroke-width="0.12" textLength="40.94" lengthAdjust="spacingAndGlyphs">Profigeräte</text>
<text x="456.60" y="467.81" font-size="9" fill="#828282" stroke="#828282" stroke-width="0.12" text-anchor="end" textLength="36.03" lengthAdjust="spacingAndGlyphs">859.357 €</text>
<text x="512.20" y="467.81" font-size="9" fill="#828282" stroke="#828282" stroke-width="0.12" text-anchor="end" textLength="36.03" lengthAdjust="spacingAndGlyphs">570.775 €</text>
<text x="567.50" y="467.81" font-size="9" fill="#5A5A5A" text-anchor="end" font-weight="bold" textLength="45.64" lengthAdjust="spacingAndGlyphs">1.430.132 €</text>
<text x="291.90" y="479.84" font-size="9" fill="#777" stroke="#777" stroke-width="0.12" textLength="53.49" lengthAdjust="spacingAndGlyphs">Sony-Displays</text>
<text x="456.60" y="479.84" font-size="9" fill="#828282" stroke="#828282" stroke-width="0.12" text-anchor="end" textLength="31.53" lengthAdjust="spacingAndGlyphs">67.792 €</text>
<text x="512.20" y="479.84" font-size="9" fill="#828282" stroke="#828282" stroke-width="0.12" text-anchor="end" textLength="36.03" lengthAdjust="spacingAndGlyphs">181.798 €</text>
<text x="567.50" y="479.84" font-size="9" fill="#5A5A5A" text-anchor="end" font-weight="bold" textLength="38.44" lengthAdjust="spacingAndGlyphs">249.590 €</text>
<text x="291.90" y="491.87" font-size="9" fill="#777" stroke="#777" stroke-width="0.12" textLength="56.75" lengthAdjust="spacingAndGlyphs">Touch-Displays</text>
<text x="456.60" y="491.87" font-size="9" fill="#828282" stroke="#828282" stroke-width="0.12" text-anchor="end" textLength="31.53" lengthAdjust="spacingAndGlyphs">26.631 €</text>
<text x="512.20" y="491.87" font-size="9" fill="#828282" stroke="#828282" stroke-width="0.12" text-anchor="end" textLength="31.53" lengthAdjust="spacingAndGlyphs">38.782 €</text>
<text x="567.50" y="491.87" font-size="9" fill="#5A5A5A" text-anchor="end" font-weight="bold" textLength="33.63" lengthAdjust="spacingAndGlyphs">65.412 €</text>
<text x="283.90" y="503.90" font-size="9" fill="#5A5A5A" font-weight="bold" textLength="40.00" lengthAdjust="spacingAndGlyphs">Sonstiges</text>
<text x="456.60" y="503.90" font-size="9" fill="#5A5A5A" text-anchor="end" font-weight="bold" textLength="33.16" lengthAdjust="spacingAndGlyphs">53.115 €</text>
<text x="512.20" y="503.90" font-size="9" fill="#5A5A5A" text-anchor="end" font-weight="bold" textLength="33.63" lengthAdjust="spacingAndGlyphs">79.826 €</text>
<text x="567.50" y="503.90" font-size="9" fill="#5A5A5A" text-anchor="end" font-weight="bold" textLength="38.44" lengthAdjust="spacingAndGlyphs">132.941 €</text>
<text x="283.90" y="514.70" font-size="9" fill="#5A5A5A" font-weight="bold" textLength="30.70" lengthAdjust="spacingAndGlyphs">Gesamt</text>
<text x="456.60" y="514.70" font-size="9" fill="#5A5A5A" text-anchor="end" font-weight="bold" textLength="45.64" lengthAdjust="spacingAndGlyphs">4.879.475 €</text>
<text x="512.20" y="514.70" font-size="9" fill="#5A5A5A" text-anchor="end" font-weight="bold" textLength="45.64" lengthAdjust="spacingAndGlyphs">4.369.379 €</text>
<text x="567.50" y="514.70" font-size="9" fill="#5A5A5A" text-anchor="end" font-weight="bold" textLength="45.64" lengthAdjust="spacingAndGlyphs">9.248.854 €</text>
<rect x="682.90" y="115.80" width="5.60" height="229.50" fill="#ADADAD" rx="2.8"/>
<rect x="681.00" y="485.00" width="8.60" height="33.60" fill="#FAFAFA" />
<text x="704.10" y="121.90" font-size="9.6" fill="#A0A0A0" stroke="#A0A0A0" stroke-width="0.12" textLength="86.40" lengthAdjust="spacingAndGlyphs">Artikelhitliste Top 10</text>
<text x="711.90" y="137.70" font-size="9" fill="#666" stroke="#666" stroke-width="0.12" textLength="28.37" lengthAdjust="spacingAndGlyphs">Umsatz</text>
<path d="M764.7 130.7 L772.2 130.7 L768.45 134.9 Z" fill="#444"/>
<text x="785.10" y="137.70" font-size="9" fill="#666" stroke="#666" stroke-width="0.12" textLength="33.50" lengthAdjust="spacingAndGlyphs">Roherlös</text>
<text x="848.30" y="137.70" font-size="9" fill="#666" stroke="#666" stroke-width="0.12" textLength="23.25" lengthAdjust="spacingAndGlyphs">Artikel</text>
<text x="893.50" y="137.70" font-size="9" fill="#666" stroke="#666" stroke-width="0.12" textLength="38.60" lengthAdjust="spacingAndGlyphs">Artikel MC</text>
<line x1="704.10" y1="140.20" x2="1017.00" y2="140.20" stroke="#CFCFCF" stroke-width="1"/>
<text x="772.70" y="150.20" font-size="9" fill="#777" stroke="#777" stroke-width="0.12" text-anchor="end" textLength="47.29" lengthAdjust="spacingAndGlyphs">703.210,03 €</text>
<text x="835.80" y="150.20" font-size="9" fill="#777" stroke="#777" stroke-width="0.12" text-anchor="end" textLength="42.79" lengthAdjust="spacingAndGlyphs">80.812,17 €</text>
<text x="848.30" y="150.20" font-size="9" fill="#777" stroke="#777" stroke-width="0.12" textLength="31.53" lengthAdjust="spacingAndGlyphs">0602027</text>
<text x="893.50" y="150.20" font-size="9" fill="#777" stroke="#777" stroke-width="0.12" textLength="144.67" lengthAdjust="spacingAndGlyphs" clip-path="url(#ca)">SV Externer DVD-Brenner M200 Silber</text>
<line x1="704.10" y1="153.13" x2="1017.00" y2="153.13" stroke="#EBEBEB" stroke-width="1"/>
<text x="772.70" y="163.13" font-size="9" fill="#777" stroke="#777" stroke-width="0.12" text-anchor="end" textLength="47.29" lengthAdjust="spacingAndGlyphs">626.961,92 €</text>
<text x="835.80" y="163.13" font-size="9" fill="#777" stroke="#777" stroke-width="0.12" text-anchor="end" textLength="42.79" lengthAdjust="spacingAndGlyphs">38.549,67 €</text>
<text x="848.30" y="163.13" font-size="9" fill="#777" stroke="#777" stroke-width="0.12" textLength="31.53" lengthAdjust="spacingAndGlyphs">0305087</text>
<text x="893.50" y="163.13" font-size="9" fill="#777" stroke="#777" stroke-width="0.12" textLength="122.18" lengthAdjust="spacingAndGlyphs" clip-path="url(#ca)">WWI Projektor720p DLP56 Weiß</text>
<line x1="704.10" y1="166.06" x2="1017.00" y2="166.06" stroke="#EBEBEB" stroke-width="1"/>
<text x="772.70" y="176.06" font-size="9" fill="#777" stroke="#777" stroke-width="0.12" text-anchor="end" textLength="47.29" lengthAdjust="spacingAndGlyphs">498.893,45 €</text>
<text x="835.80" y="176.06" font-size="9" fill="#777" stroke="#777" stroke-width="0.12" text-anchor="end" textLength="42.79" lengthAdjust="spacingAndGlyphs">31.167,14 €</text>
<text x="848.30" y="176.06" font-size="9" fill="#777" stroke="#777" stroke-width="0.12" textLength="31.53" lengthAdjust="spacingAndGlyphs">0405009</text>
<text x="893.50" y="176.06" font-size="9" fill="#777" stroke="#777" stroke-width="0.12" textLength="135.05" lengthAdjust="spacingAndGlyphs" clip-path="url(#ca)">Fabrikam Trendsetter (25 mm) X400</text>
<line x1="704.10" y1="178.99" x2="1017.00" y2="178.99" stroke="#EBEBEB" stroke-width="1"/>
<text x="772.70" y="188.99" font-size="9" fill="#777" stroke="#777" stroke-width="0.12" text-anchor="end" textLength="47.29" lengthAdjust="spacingAndGlyphs">400.149,10 €</text>
<text x="835.80" y="188.99" font-size="9" fill="#777" stroke="#777" stroke-width="0.12" text-anchor="end" textLength="42.79" lengthAdjust="spacingAndGlyphs">76.516,89 €</text>
<text x="848.30" y="188.99" font-size="9" fill="#777" stroke="#777" stroke-width="0.12" textLength="31.53" lengthAdjust="spacingAndGlyphs">0308074</text>
<text x="893.50" y="188.99" font-size="9" fill="#777" stroke="#777" stroke-width="0.12" textLength="130.74" lengthAdjust="spacingAndGlyphs" clip-path="url(#ca)">Contoso Alternatives Desktoppaket</text>
<line x1="704.10" y1="191.92" x2="1017.00" y2="191.92" stroke="#EBEBEB" stroke-width="1"/>
<text x="772.70" y="201.92" font-size="9" fill="#777" stroke="#777" stroke-width="0.12" text-anchor="end" textLength="47.29" lengthAdjust="spacingAndGlyphs">376.901,20 €</text>
<text x="835.80" y="201.92" font-size="9" fill="#777" stroke="#777" stroke-width="0.12" text-anchor="end" textLength="42.79" lengthAdjust="spacingAndGlyphs">47.964,06 €</text>
<text x="848.30" y="201.92" font-size="9" fill="#777" stroke="#777" stroke-width="0.12" textLength="31.53" lengthAdjust="spacingAndGlyphs">0305067</text>
<text x="893.50" y="201.92" font-size="9" fill="#777" stroke="#777" stroke-width="0.12" textLength="120.20" lengthAdjust="spacingAndGlyphs" clip-path="url(#ca)">Contoso Bildschirm (125&quot;) M250</text>
<line x1="704.10" y1="204.85" x2="1017.00" y2="204.85" stroke="#EBEBEB" stroke-width="1"/>
<text x="772.70" y="214.85" font-size="9" fill="#777" stroke="#777" stroke-width="0.12" text-anchor="end" textLength="46.69" lengthAdjust="spacingAndGlyphs">311.954,14 €</text>
<text x="835.80" y="214.85" font-size="9" fill="#777" stroke="#777" stroke-width="0.12" text-anchor="end" textLength="42.79" lengthAdjust="spacingAndGlyphs">67.413,92 €</text>
<text x="848.30" y="214.85" font-size="9" fill="#777" stroke="#777" stroke-width="0.12" textLength="31.53" lengthAdjust="spacingAndGlyphs">0806137</text>
<text x="893.50" y="214.85" font-size="9" fill="#777" stroke="#777" stroke-width="0.12" textLength="119.57" lengthAdjust="spacingAndGlyphs" clip-path="url(#ca)">Litware Stehlampe X1015 Silber</text>
<line x1="704.10" y1="217.78" x2="1017.00" y2="217.78" stroke="#EBEBEB" stroke-width="1"/>
<text x="772.70" y="227.78" font-size="9" fill="#777" stroke="#777" stroke-width="0.12" text-anchor="end" textLength="46.69" lengthAdjust="spacingAndGlyphs">294.636,11 €</text>
<text x="835.80" y="227.78" font-size="9" fill="#777" stroke="#777" stroke-width="0.12" text-anchor="end" textLength="42.79" lengthAdjust="spacingAndGlyphs">42.031,32 €</text>
<text x="848.30" y="227.78" font-size="9" fill="#777" stroke="#777" stroke-width="0.12" textLength="31.53" lengthAdjust="spacingAndGlyphs">0802009</text>
<text x="893.50" y="227.78" font-size="9" fill="#777" stroke="#777" stroke-width="0.12" textLength="125.59" lengthAdjust="spacingAndGlyphs" clip-path="url(#ca)">Fabrikam Kühlschrank (274,6 l) M</text>
<line x1="704.10" y1="230.71" x2="1017.00" y2="230.71" stroke="#EBEBEB" stroke-width="1"/>
<text x="772.70" y="240.71" font-size="9" fill="#777" stroke="#777" stroke-width="0.12" text-anchor="end" textLength="47.29" lengthAdjust="spacingAndGlyphs">227.929,85 €</text>
<text x="835.80" y="240.71" font-size="9" fill="#777" stroke="#777" stroke-width="0.12" text-anchor="end" textLength="42.79" lengthAdjust="spacingAndGlyphs">38.485,35 €</text>
<text x="848.30" y="240.71" font-size="9" fill="#777" stroke="#777" stroke-width="0.12" textLength="31.53" lengthAdjust="spacingAndGlyphs">0504097</text>
<text x="893.50" y="240.71" font-size="9" fill="#777" stroke="#777" stroke-width="0.12" textLength="137.25" lengthAdjust="spacingAndGlyphs" clip-path="url(#ca)">The Phone Company PDA-Handheld</text>
<line x1="704.10" y1="243.64" x2="1017.00" y2="243.64" stroke="#EBEBEB" stroke-width="1"/>
<text x="772.70" y="253.64" font-size="9" fill="#777" stroke="#777" stroke-width="0.12" text-anchor="end" textLength="47.29" lengthAdjust="spacingAndGlyphs">216.449,68 €</text>
<text x="835.80" y="253.64" font-size="9" fill="#777" stroke="#777" stroke-width="0.12" text-anchor="end" textLength="42.79" lengthAdjust="spacingAndGlyphs">36.067,31 €</text>
<text x="848.30" y="253.64" font-size="9" fill="#777" stroke="#777" stroke-width="0.12" textLength="31.53" lengthAdjust="spacingAndGlyphs">0402032</text>
<text x="893.50" y="253.64" font-size="9" fill="#777" stroke="#777" stroke-width="0.12" textLength="129.03" lengthAdjust="spacingAndGlyphs" clip-path="url(#ca)">A. Datum SLR-Kamera (35)&quot; M350</text>
<line x1="704.10" y1="256.57" x2="1017.00" y2="256.57" stroke="#EBEBEB" stroke-width="1"/>
<text x="772.70" y="266.57" font-size="9" fill="#777" stroke="#777" stroke-width="0.12" text-anchor="end" textLength="47.29" lengthAdjust="spacingAndGlyphs">175.463,35 €</text>
<text x="835.80" y="266.57" font-size="9" fill="#777" stroke="#777" stroke-width="0.12" text-anchor="end" textLength="42.79" lengthAdjust="spacingAndGlyphs">29.693,73 €</text>
<text x="848.30" y="266.57" font-size="9" fill="#777" stroke="#777" stroke-width="0.12" textLength="31.53" lengthAdjust="spacingAndGlyphs">0106018</text>
<text x="893.50" y="266.57" font-size="9" fill="#777" stroke="#777" stroke-width="0.12" textLength="130.27" lengthAdjust="spacingAndGlyphs" clip-path="url(#ca)">NT Drahtlose Bluetooth-Stereokopf</text>
<line x1="704.10" y1="269.50" x2="1017.00" y2="269.50" stroke="#CFCFCF" stroke-width="1"/>
<text x="772.70" y="278.90" font-size="9" fill="#5A5A5A" text-anchor="end" font-weight="bold" textLength="57.65" lengthAdjust="spacingAndGlyphs">3.832.548,81 €</text>
<text x="836.50" y="278.90" font-size="9" fill="#5A5A5A" text-anchor="end" font-weight="bold" textLength="50.45" lengthAdjust="spacingAndGlyphs">488.701,57 €</text>
<rect x="703.50" y="305.20" width="313.70" height="7.40" fill="#F0F0F0" />
<rect x="725.40" y="305.20" width="243.50" height="7.40" fill="#C8C8C8" />
<path d="M715.9 306.7 L712.7 308.9 L715.9 311.1" fill="none" stroke="#555" stroke-width="1.2"/>
<path d="M1005.3 306.7 L1008.5 308.9 L1005.3 311.1" fill="none" stroke="#555" stroke-width="1.2"/>
<text x="704.00" y="327.20" font-size="10" fill="#BDBDBD" stroke="#BDBDBD" stroke-width="0.12" textLength="255.00" lengthAdjust="spacingAndGlyphs">Umsatz nach Artikelgruppe und Artikelgruppenbezeichnung</text>
<rect x="704.00" y="333.60" width="97.10" height="107.00" fill="#2F70C4" />
<rect x="801.80" y="333.60" width="110.00" height="59.20" fill="#747474" />
<rect x="801.80" y="393.90" width="110.00" height="46.70" fill="#EAC31A" />
<rect x="912.40" y="333.60" width="60.90" height="55.20" fill="#F0625C" />
<rect x="974.00" y="333.60" width="42.80" height="55.20" fill="#4A5D6A" />
<rect x="912.40" y="389.70" width="47.30" height="31.90" fill="#9AD3EC" />
<rect x="912.40" y="422.30" width="47.30" height="18.30" fill="#F49767" />
<rect x="960.20" y="389.70" width="21.50" height="13.30" fill="#A66999" />
<rect x="960.20" y="403.50" width="21.50" height="12.90" fill="#4A97B8" />
<rect x="960.20" y="417.10" width="21.50" height="12.70" fill="#DBBFC0" />
<rect x="960.20" y="430.50" width="21.50" height="10.10" fill="#5FC4BA" />
<rect x="982.20" y="389.70" width="13.40" height="16.40" fill="#5F6B6D" />
<rect x="996.30" y="389.70" width="10.50" height="16.40" fill="#6A3BBF" />
<rect x="1007.50" y="389.70" width="9.30" height="16.40" fill="#61D838" />
<rect x="982.20" y="406.80" width="13.40" height="9.90" fill="#8C7379" />
<rect x="996.30" y="406.80" width="7.00" height="9.90" fill="#5BC8A0" />
<rect x="1004.00" y="406.80" width="6.00" height="9.90" fill="#3137C6" />
<rect x="1010.80" y="406.80" width="6.00" height="9.90" fill="#EFA33F" />
<rect x="982.20" y="417.40" width="13.40" height="8.80" fill="#59D27A" />
<rect x="996.30" y="417.40" width="7.00" height="8.80" fill="#E3E82B" />
<rect x="1004.00" y="417.40" width="6.00" height="8.80" fill="#52D056" />
<rect x="1010.80" y="417.40" width="6.00" height="8.80" fill="#4036C0" />
<rect x="982.20" y="427.00" width="13.40" height="7.00" fill="#9F53B8" />
<rect x="982.20" y="434.40" width="13.40" height="6.20" fill="#ABE328" />
<rect x="996.30" y="427.00" width="8.00" height="4.90" fill="#A8E32E" />
<rect x="996.30" y="432.30" width="8.00" height="3.80" fill="#7F7574" />
<rect x="996.30" y="436.50" width="8.00" height="4.10" fill="#3056C8" />
<rect x="1004.80" y="427.00" width="5.20" height="6.30" fill="#B372AC" />
<rect x="1004.80" y="433.70" width="5.20" height="3.50" fill="#8F6F8A" />
<rect x="1004.80" y="437.50" width="5.20" height="3.10" fill="#52D056" />
<rect x="1010.50" y="427.00" width="2.80" height="6.30" fill="#A8E32E" />
<rect x="1013.80" y="427.00" width="3.00" height="5.60" fill="#3056C8" />
<rect x="1010.50" y="433.70" width="2.80" height="3.50" fill="#7E4FC0" />
<rect x="1013.80" y="433.00" width="3.00" height="4.20" fill="#5FC4BA" />
<rect x="1010.50" y="437.50" width="6.30" height="3.10" fill="#E8C03A" />
<text x="708.20" y="347.20" font-size="9.6" fill="#fff" textLength="25.60" lengthAdjust="spacingAndGlyphs">01400</text>
<text x="708.20" y="437.20" font-size="8.6" fill="#fff" textLength="28.50" lengthAdjust="spacingAndGlyphs">Bravado</text>
<text x="805.50" y="347.20" font-size="9.6" fill="#fff" textLength="25.60" lengthAdjust="spacingAndGlyphs">01200</text>
<text x="805.50" y="390.60" font-size="8.6" fill="#fff" textLength="52.30" lengthAdjust="spacingAndGlyphs">Businessgeräte</text>
<text x="805.50" y="407.90" font-size="9.6" fill="#fff" textLength="25.60" lengthAdjust="spacingAndGlyphs">01300</text>
<text x="805.50" y="437.20" font-size="8.6" fill="#fff" textLength="39.00" lengthAdjust="spacingAndGlyphs">Profigeräte</text>
<text x="916.70" y="347.20" font-size="9.6" fill="#fff" textLength="25.60" lengthAdjust="spacingAndGlyphs">11010</text>
<text x="916.30" y="385.80" font-size="8.6" fill="#fff" textLength="39.30" lengthAdjust="spacingAndGlyphs">Festplatten</text>
<text x="977.70" y="347.20" font-size="9.6" fill="#fff" textLength="25.60" lengthAdjust="spacingAndGlyphs">03000</text>
<text x="977.70" y="385.80" font-size="8.6" fill="#fff" textLength="32.00" lengthAdjust="spacingAndGlyphs">Lautspr...</text>
<text x="916.70" y="403.10" font-size="9.6" fill="#fff" textLength="25.60" lengthAdjust="spacingAndGlyphs">11030</text>
<text x="916.70" y="435.60" font-size="9.6" fill="#fff" textLength="25.60" lengthAdjust="spacingAndGlyphs">02400</text>
<text x="704.00" y="455.70" font-size="10" fill="#BDBDBD" stroke="#BDBDBD" stroke-width="0.12" textLength="119.00" lengthAdjust="spacingAndGlyphs">Umsatz nach Kundengruppe</text>
<rect x="704.00" y="462.40" width="149.10" height="61.70" fill="#2F70C4" />
<rect x="854.90" y="462.40" width="120.20" height="61.70" fill="#747474" />
<rect x="976.60" y="462.40" width="24.60" height="30.20" fill="#EAC31A" />
<rect x="1002.60" y="462.40" width="14.00" height="30.20" fill="#F0625C" />
<rect x="977.00" y="494.00" width="19.90" height="17.10" fill="#4A5D6A" />
<rect x="998.50" y="494.00" width="12.50" height="17.10" fill="#F49767" />
<rect x="1012.10" y="494.00" width="4.50" height="17.10" fill="#A66999" />
<rect x="977.00" y="512.70" width="19.90" height="11.40" fill="#9AD3EC" />
<rect x="998.70" y="513.30" width="6.10" height="5.40" fill="#4A97B8" />
<rect x="1006.20" y="513.30" width="3.30" height="5.40" fill="#5FC4BA" />
<rect x="1010.70" y="513.30" width="2.30" height="5.40" fill="#5F6B6D" />
<rect x="1014.30" y="513.30" width="2.30" height="5.40" fill="#6A3BBF" />
<rect x="998.70" y="520.50" width="6.10" height="3.60" fill="#DBBFC0" />
<rect x="1006.20" y="520.50" width="3.30" height="3.60" fill="#61D838" />
<rect x="1010.70" y="520.50" width="2.30" height="3.60" fill="#8C7379" />
<text x="708.00" y="475.90" font-size="10" fill="#fff" textLength="21.00" lengthAdjust="spacingAndGlyphs">H010</text>
<text x="858.30" y="475.90" font-size="10" fill="#fff" textLength="23.60" lengthAdjust="spacingAndGlyphs">(Leer)</text>
<text x="980.20" y="475.90" font-size="10" fill="#fff" textLength="15.00" lengthAdjust="spacingAndGlyphs">H...</text>
<rect x="0.00" y="551.60" width="1024.00" height="33.40" fill="#2F70C4" />
<text x="83.40" y="577.60" font-size="14.3" fill="#fff" textLength="204.00" lengthAdjust="spacingAndGlyphs">101 : Contoso Deutschland GmbH</text>
<text x="423.90" y="576.60" font-size="17.3" fill="#fff" font-weight="bold" textLength="159.60" lengthAdjust="spacingAndGlyphs">D - Umsatz Gruppen</text>
<text x="864.90" y="564.90" font-size="9" fill="#fff" textLength="112.60" lengthAdjust="spacingAndGlyphs">Letzte Datenaktualisierung</text>
<text x="855.00" y="583.40" font-size="12.8" fill="#fff" textLength="132.40" lengthAdjust="spacingAndGlyphs">10.08.2020 14:43:43</text>
</svg>
</body></html>
